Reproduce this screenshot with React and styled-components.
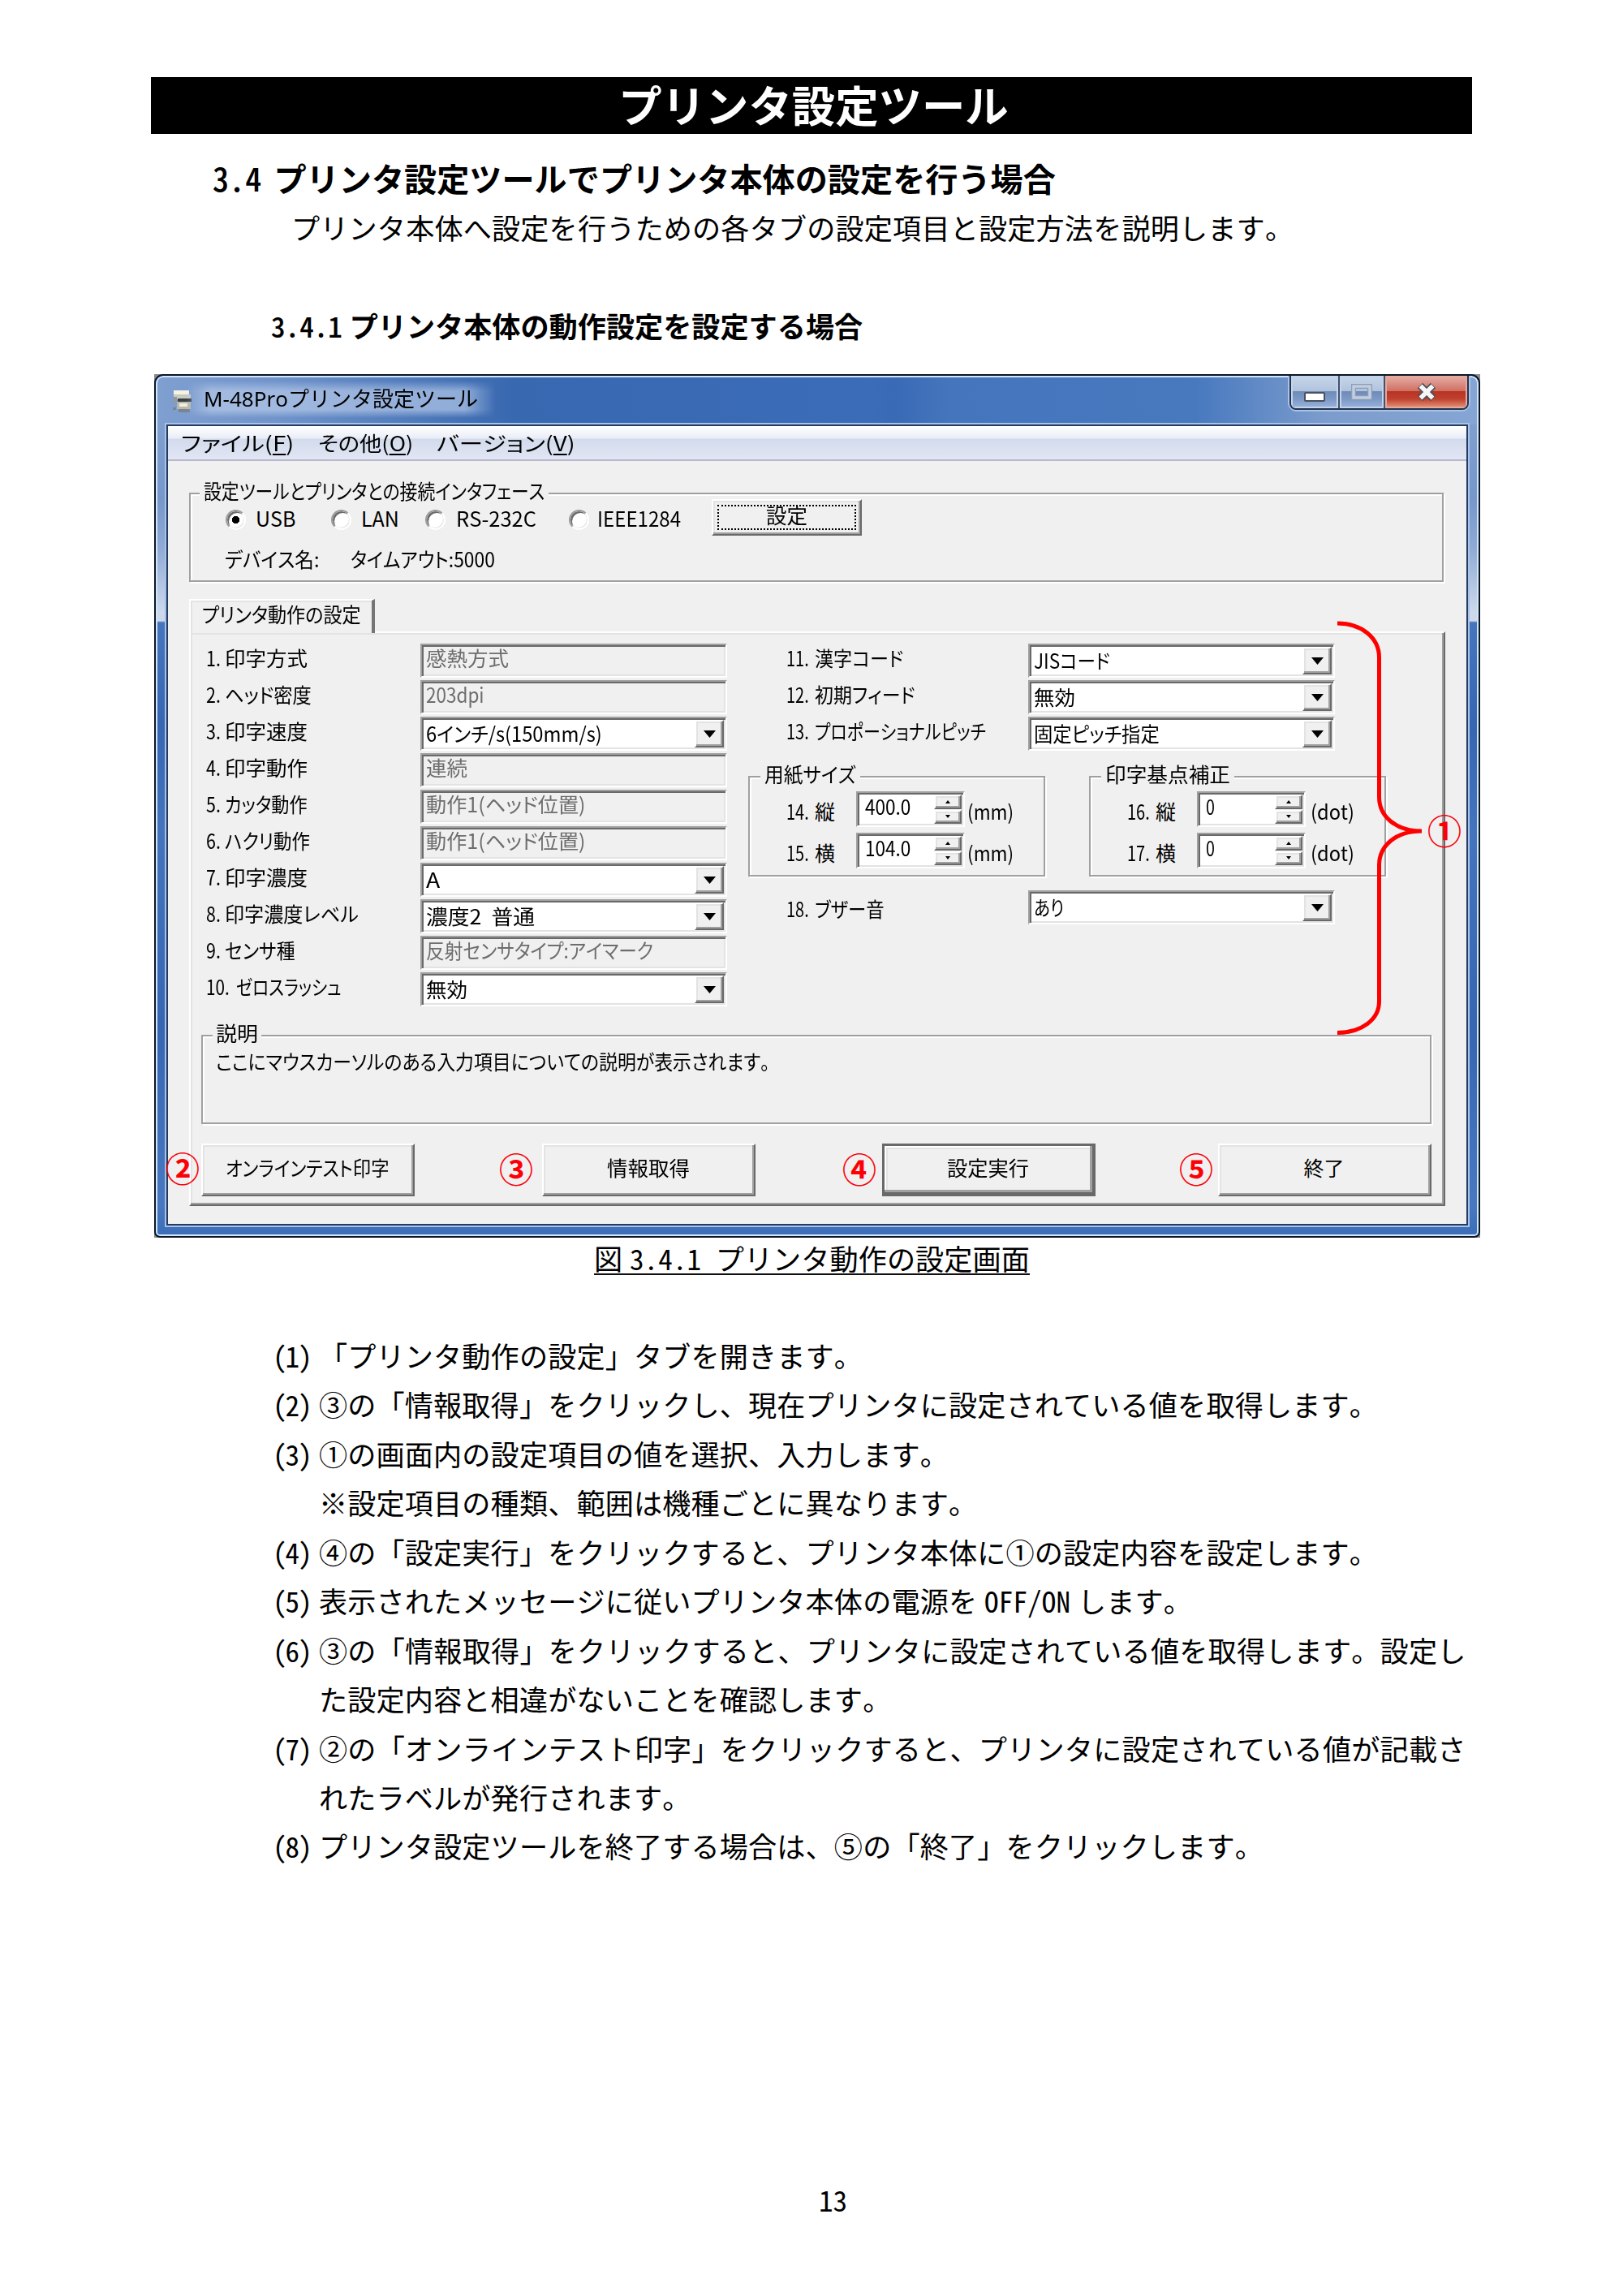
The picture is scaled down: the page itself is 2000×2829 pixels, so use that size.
import React, { useLayoutEffect, useRef, useState } from "react";
import styled, { createGlobalStyle, css } from "styled-components";

const GlobalStyle = createGlobalStyle`
  html, body { margin: 0; padding: 0; background: #fff; }
  *, *::before, *::after { box-sizing: border-box; }
`;

const gothic = `"Noto Sans CJK JP", "Liberation Sans", sans-serif`;
const face = "#f0f0f0";

/* ---------- document ---------- */

const Page = styled.main`
  width: 2000px;
  height: 2829px;
  padding: 95px 186px 0;
  display: flex;
  flex-direction: column;
  background: #fff;
  color: #000;
  font-family: ${gothic};
  font-size: 35.15px;
  font-feature-settings: "hwid";
  text-spacing-trim: space-all;
  font-kerning: none;
  white-space: nowrap;
`;

const Banner = styled.h1`
  margin: 0;
  height: 70px;
  padding-left: 5px;
  background: #000;
  color: #fff;
  font-size: 53.4px;
  font-weight: 700;
  line-height: 65px;
  text-align: center;
`;

const SectionTitle = styled.h2`
  margin: 28px 0 0 76px;
  height: 50px;
  line-height: 51px;
  font-size: 40.15px;
  font-weight: 700;
`;

const HeadNo = styled.span`
  font-weight: 500;
`;

const Lead = styled.p`
  margin: 11px 0 0 173px;
  height: 50px;
  line-height: 51px;
  letter-spacing: 0.15px;
`;

const SubTitle = styled.h3`
  margin: 71px 0 0 148px;
  height: 50px;
  line-height: 51px;
  font-size: inherit;
  font-weight: 700;
`;

const Space = styled.span`
  display: inline-block;
  width: ${(p) => p.$em}em;
`;

const Caption = styled.p`
  margin: 2px 0 0 546px;
  width: 537px;
  height: 44px;
  line-height: 45px;
  letter-spacing: 0.06px;
  border-bottom: 2px solid #111;
`;

const Steps = styled.ol`
  margin: 69px 0 0 147px;
  padding: 0;
  list-style: none;
`;

const Step = styled.li`
  display: flex;
  line-height: 60.45px;
`;

const StepNo = styled.span`
  width: 60px;
  padding-left: 3px;
  flex: none;
  letter-spacing: -2px;
`;

const StepLine = styled.div`
  height: 60.45px;
  letter-spacing: ${(p) => (p.$wide ? "0.2px" : "0.13px")};
`;

const PageNo = styled.footer`
  margin: 375px 0 0 823px;
  line-height: 60px;
`;

/* ---------- window chrome ---------- */

const WindowBack = styled.section`
  flex: none;
  width: 1634px;
  height: 1064px;
  margin: 36px 0 0 4px;
  background: #8b8b8b;
  font-size: 25px;
  font-feature-settings: "palt";
`;

const Frame = styled.div`
  height: 100%;
  border: 2px solid #0b1626;
  border-radius: 11px 11px 7px 7px;
  background: #3b6db8;
  overflow: hidden;
`;

const Glass = styled.div`
  height: 100%;
  border: 2px solid #d3e6fa;
  border-radius: 9px 9px 5px 5px;
  padding: 0 9px 9px;
  display: flex;
  flex-direction: column;
  background:
    linear-gradient(90deg, #7f9fd0 0, #7093cb 150px, #3868b0 440px, #3b6cb8 880px, #386ab5 905px, #4576bd 980px, #4879bf 1280px, #7c9ccd 1440px, #85a5d4 1626px) 0 0 / 100% 58px no-repeat,
    linear-gradient(180deg, #85a4d4 0, #7697cb 150px, #8faad5 210px, #cdd9eb 290px, #cdd9eb 300px, #4576bd 302px, #3666b2 430px, #4374bd 560px, #3666b2 800px, #4778c0 1020px, #3b6cb8 1060px);
`;

const TitleBar = styled.header`
  height: 56px;
  flex: none;
  display: flex;
  align-items: flex-start;
`;

const AppIcon = styled.svg`
  width: 26px;
  height: 30px;
  margin: 14px 0 0 9px;
`;

const TitleText = styled.div`
  margin: 4px 0 0 -9px;
  padding: 0 22px;
  height: 46px;
  line-height: 44px;
  font-family: "Noto Sans", ${gothic};
  font-size: 26px;
  font-feature-settings: normal;
  background: linear-gradient(90deg, rgba(190, 208, 236, 0), rgba(190, 208, 236, 0.62) 8%, rgba(190, 208, 236, 0.62) 90%, rgba(190, 208, 236, 0));
  -webkit-mask-image: linear-gradient(180deg, transparent, #000 28%, #000 78%, transparent);
  mask-image: linear-gradient(180deg, transparent, #000 28%, #000 78%, transparent);
`;

const WindowButtons = styled.div`
  margin: -2px 1px 0 auto;
  display: flex;
  height: 42px;
  border: 2px solid #22344f;
  border-top: 0;
  border-radius: 0 0 8px 8px;
  box-shadow: 0 2px 0 #a9c2e6, 2px 0 0 #a9c2e6, -2px 0 0 #a9c2e6;
  overflow: hidden;
`;

const WindowButton = styled.div`
  width: ${(p) => p.$w}px;
  display: flex;
  align-items: center;
  justify-content: center;
  border: 2px solid ${(p) => (p.$close ? "#e7a79d" : "#c3d3ea")};
  border-top-width: 1px;
  background: ${(p) =>
    p.$close
      ? "linear-gradient(180deg, #e6aca3 0, #cf6f62 48%, #b93323 50%, #c0412f 75%, #df8a70 100%)"
      : "linear-gradient(180deg, #c6d5e9 0, #b0c3de 48%, #6f8cb9 50%, #7c99c6 75%, #94afd8 100%)"};
  & + & {
    box-shadow: -2px 0 0 #40526e;
    margin-left: 2px;
  }
`;

const ClientEdge = styled.div`
  flex: 1;
  border: 2px solid #a9c3e8;
`;

const Client = styled.div`
  height: 100%;
  border: 2px solid #243b62;
  background: ${face};
`;

const MenuBar = styled.nav`
  height: 43px;
  padding: 0 0 0 16px;
  display: flex;
  line-height: 41px;
  background: linear-gradient(180deg, #fff 0, #e9edf7 15px, #d2dbec 16px, #e2e6f5 41px);
  border-bottom: 2px solid #b7b8cd;
`;

const MenuItem = styled.span`
  margin-right: ${(p) => p.$after || 0}px;
  u { text-underline-offset: 3px; text-decoration-thickness: 2px; }
`;

/* ---------- text fitted to the narrow UI font's advance ---------- */

const FitBox = styled.span`
  display: inline-block;
  flex: none;
  white-space: pre;
`;

const FitInner = styled.span`
  display: inline-block;
  transform-origin: 0 50%;
`;

function Fit({ w, children }) {
  const ref = useRef(null);
  const [scale, setScale] = useState(1);
  useLayoutEffect(() => {
    if (ref.current && ref.current.offsetWidth) setScale(w / ref.current.offsetWidth);
  }, [w, children]);
  return (
    <FitBox style={{ width: w }}>
      <FitInner ref={ref} style={{ transform: `scaleX(${scale})` }}>
        {children}
      </FitInner>
    </FitBox>
  );
}

/* ---------- classic controls ---------- */

const raised = css`
  background: ${face};
  border: 2px solid;
  border-color: #fff #696969 #696969 #fff;
  box-shadow: inset -2px -2px 0 #a0a0a0, inset 2px 2px 0 #e3e3e3;
`;

const Body = styled.div`
  padding: 39px 26px 0;
`;

const Group = styled.section`
  width: ${(p) => p.$w}px;
  height: ${(p) => p.$h}px;
  margin-left: ${(p) => p.$left || 0}px;
  border: 2px solid #a0a0a0;
  box-shadow: 2px 2px 0 #fff, inset 2px 2px 0 #fff;
`;

const Legend = styled.div`
  width: fit-content;
  height: 26px;
  line-height: 26px;
  margin: -18px 0 0 ${(p) => p.$left}px;
  padding: 0 ${(p) => p.$pad || 5}px;
  background: ${face};
`;

const InterfaceRow = styled.div`
  height: 45px;
  margin-top: -2px;
  padding-left: 43px;
  display: flex;
  align-items: center;
`;

const RadioLabel = styled.label`
  display: flex;
  align-items: center;
  line-height: 46px;
  gap: ${(p) => p.$gap}px;
  margin-right: ${(p) => p.$after}px;
`;

const RadioDot = styled.span`
  width: 25px;
  height: 25px;
  margin-top: 6px;
  border-radius: 50%;
  border: 2px solid;
  border-color: #9a9a9a #fff #fff #9a9a9a;
  background: ${(p) =>
    p.$on ? "radial-gradient(circle, #000 0 4.4px, #fff 5px)" : "#fff"};
  box-shadow: inset 2px 2px 0 #6b6b6b, inset -1px -1px 0 #e3e3e3;
`;

const DeviceRow = styled.div`
  margin: 15px 0 0 42px;
  height: 26px;
  line-height: 26px;
  display: flex;
  gap: 39px;
`;

const SetButton = styled.button`
  ${raised}
  width: 185px;
  height: 45px;
  padding: 5px;
  font: inherit;
  font-feature-settings: inherit;
  color: #000;
`;

const FocusRing = styled.span`
  display: block;
  height: 31px;
  border: 2px dotted #000;
  line-height: 21px;
`;

const Tab = styled.div`
  position: relative;
  z-index: 1;
  width: 229px;
  height: 42px;
  margin: 21px 0 -2px;
  padding-left: 14px;
  line-height: 32px;
  background: ${face};
  border: solid;
  border-width: 2px 4px 0 2px;
  border-color: #fff #757575 #fff #fff;
  box-shadow: inset 2px 2px 0 #e3e3e3;
`;

const Pane = styled.section`
  ${raised}
  position: relative;
  width: 1548px;
  height: 708px;
`;

const Columns = styled.div`
  height: 495px;
  padding: 13px 0 0 19px;
  display: flex;
  gap: 26px;
`;

const Column = styled.div`
  display: flex;
  flex-direction: column;
  gap: 3px;
`;

const FieldRow = styled.div`
  display: flex;
  height: 42px;
  padding-left: ${(p) => p.$indent || 0}px;
`;

const FieldLabel = styled.div`
  width: ${(p) => p.$w}px;
  padding-top: ${(p) => p.$top ?? 4}px;
  line-height: 26px;
  display: flex;
`;

const FieldNo = styled.span`
  width: ${(p) => p.$w}px;
  flex: none;
`;

const sunken = css`
  border: 2px solid;
  border-color: #a0a0a0 #fff #fff #a0a0a0;
  box-shadow: inset 2px 2px 0 #696969, inset -2px -2px 0 #e3e3e3;
`;

const FieldBox = styled.div`
  ${sunken}
  width: 378px;
  height: 42px;
  padding: 2px 2px 2px 5px;
  display: flex;
  justify-content: space-between;
  line-height: ${(p) => (p.$off ? 27 : 33)}px;
  color: ${(p) => (p.$off ? "#6d6d6d" : "#000")};
  background: ${(p) => (p.$off ? face : "#fff")};
`;

const DropButton = styled.span`
  ${raised}
  width: 36px;
  height: 34px;
  display: flex;
  align-items: center;
  justify-content: center;
`;

const Groups = styled.div`
  display: flex;
  gap: 54px;
  margin: 28px 0 14px;
`;

const SpinRow = styled.div`
  display: flex;
  height: 44px;
  margin-top: ${(p) => p.$gap}px;
  padding-left: 45px;
  line-height: 48px;
`;

const SpinLabel = styled.span`
  width: 51px;
`;

const SpinBox = styled.span`
  ${sunken}
  width: 134px;
  height: 44px;
  padding: 2px 2px 2px 9px;
  margin-right: ${(p) => p.$after}px;
  display: flex;
  justify-content: space-between;
  line-height: 29px;
  background: #fff;
`;

const SpinButtons = styled.span`
  display: flex;
  flex-direction: column;
  gap: 1px;
  background: ${face};
`;

const SpinButton = styled.span`
  ${raised}
  width: 34px;
  height: 18px;
  display: flex;
  align-items: center;
  justify-content: center;
`;

const HelpText = styled.p`
  margin: 9px 0 0 16px;
  line-height: 26px;
`;

const Actions = styled.div`
  display: flex;
  margin: 24px 0 0 13px;
`;

const ActionSlot = styled.div`
  position: relative;
  margin-right: ${(p) => p.$after || 0}px;
`;

const ActionButton = styled.button`
  ${raised}
  display: block;
  width: 263px;
  height: 65px;
  padding: 0 2px 7px 0;
  font: inherit;
  font-feature-settings: inherit;
  color: #000;
  ${(p) =>
    p.$primary &&
    css`
      border: 3px solid #696969;
      border-width: 3px 4px 5px 3px;
      padding-bottom: 5px;
      box-shadow: inset -3px -3px 0 #a0a0a0, inset 2px 2px 0 #fff, inset 4px 4px 0 #e3e3e3;
    `}
`;

const Callout = styled.span`
  position: absolute;
  z-index: 2;
  left: ${(p) => p.$x}px;
  top: ${(p) => p.$y}px;
  width: 44px;
  height: 44px;
  margin: -22px 0 0 -22px;
  line-height: 40px;
  font-size: 42px;
  font-weight: 700;
  font-feature-settings: normal;
  text-align: center;
  color: #fb0007;
`;

const Brace = styled.svg`
  position: absolute;
  z-index: 2;
  left: 1411px;
  top: -16px;
  width: 112px;
  height: 514px;
  overflow: visible;
`;

/* ---------- pieces ---------- */

const Arrow = ({ w = 15, h = 9, up }) => (
  <svg width={w} height={h} viewBox="0 0 14 8" preserveAspectRatio="none">
    <path d={up ? "M0 8 L7 0 L14 8Z" : "M0 0 L14 0 L7 8Z"} fill="#000" />
  </svg>
);

function Radio({ text, w, gap, after, on }) {
  return (
    <RadioLabel $gap={gap} $after={after}>
      <RadioDot $on={on} />
      <Fit w={w}>{text}</Fit>
    </RadioLabel>
  );
}

function Field({ no, noW, noCol, label, labelW, col, value, valueW, off, indent, top }) {
  return (
    <FieldRow $indent={indent}>
      <FieldLabel $w={col} $top={top}>
        <FieldNo $w={noCol}>
          <Fit w={noW}>{no}</Fit>
        </FieldNo>
        <Fit w={labelW}>{label}</Fit>
      </FieldLabel>
      <FieldBox $off={off}>
        <Fit w={valueW}>{value}</Fit>
        {!off && (
          <DropButton>
            <Arrow />
          </DropButton>
        )}
      </FieldBox>
    </FieldRow>
  );
}

function Spin({ no, label, value, valueW, unit, unitW, gap, unitGap = 3 }) {
  return (
    <SpinRow $gap={gap}>
      <FieldNo $w={35}>
        <Fit w={28}>{no}</Fit>
      </FieldNo>
      <SpinLabel>{label}</SpinLabel>
      <SpinBox $after={unitGap}>
        <Fit w={valueW}>{value}</Fit>
        <SpinButtons>
          <SpinButton><Arrow up w={6} h={4} /></SpinButton>
          <SpinButton><Arrow w={6} h={4} /></SpinButton>
        </SpinButtons>
      </SpinBox>
      <Fit w={unitW}>{unit}</Fit>
    </SpinRow>
  );
}

const leftFields = [
  ["1.", "印字方式", 102, "感熱方式", 102, true],
  ["2.", "ヘッド密度", 107, "203dpi", 72, true],
  ["3.", "印字速度", 102, "6インチ/s(150mm/s)", 217],
  ["4.", "印字動作", 102, "連続", 51, true],
  ["5.", "カッタ動作", 102, "動作1(ヘッド位置)", 197, true],
  ["6.", "ハクリ動作", 105, "動作1(ヘッド位置)", 197, true],
  ["7.", "印字濃度", 102, "A", 17],
  ["8.", "印字濃度レベル", 165, "濃度2  普通", 134],
  ["9.", "センサ種", 87, "反射センサタイプ:アイマーク", 280, true],
  ["10.", "ゼロスラッシュ", 130, "無効", 51],
];

const rightFields = [
  ["11.", "漢字コード", 109, "JISコード", 94],
  ["12.", "初期フィード", 124, "無効", 51],
  ["13.", "プロポーショナルピッチ", 211, "固定ピッチ指定", 155],
];

const actions = [
  { text: "オンラインテスト印字", w: 202, mark: "②", x: -23, y: 31, after: 157 },
  { text: "情報取得", w: 102, mark: "③", x: -32, y: 32, after: 156 },
  { text: "設定実行", w: 101, mark: "④", x: -28, y: 32, after: 151, primary: true },
  { text: "終了", w: 50, mark: "⑤", x: -27, y: 32 },
];

const steps = [
  ["(1)", ["「プリンタ動作の設定」タブを開きます。"]],
  ["(2)", ["③の「情報取得」をクリックし、現在プリンタに設定されている値を取得します。"]],
  ["(3)", ["①の画面内の設定項目の値を選択、入力します。", "※設定項目の種類、範囲は機種ごとに異なります。"]],
  ["(4)", ["④の「設定実行」をクリックすると、プリンタ本体に①の設定内容を設定します。"]],
  ["(5)", [
    <React.Fragment key="p">
      表示されたメッセージに従いプリンタ本体の電源を<Space $em={0.25} />OFF/ON<Space $em={0.25} />します。
    </React.Fragment>,
  ]],
  ["(6)", ["③の「情報取得」をクリックすると、プリンタに設定されている値を取得します。設定し", "た設定内容と相違がないことを確認します。"]],
  ["(7)", ["②の「オンラインテスト印字」をクリックすると、プリンタに設定されている値が記載さ", "れたラベルが発行されます。"]],
  ["(8)", ["プリンタ設定ツールを終了する場合は、⑤の「終了」をクリックします。"]],
];

function PrinterIcon() {
  return (
    <AppIcon viewBox="0 0 26 30">
      <path d="M2 2h19v5H2z" fill="#f4f3e4" />
      <path d="M2 7h21v6H2z" fill="#c9cbbd" />
      <path d="M7 12h17v4H7z" fill="#3b3f45" />
      <path d="M6 16h17v9H6z" fill="#b9b9aa" />
      <path d="M9 18h10v4H9z" fill="#efeee0" />
      <path d="M1 10h5v8H1z" fill="#8f9aa8" />
      <path d="M1 23h4v3H1z M8 25h14v4H8z" fill="#7b8390" />
    </AppIcon>
  );
}

function SettingsWindow() {
  return (
    <WindowBack>
      <Frame>
        <Glass>
          <TitleBar>
            <PrinterIcon />
            <TitleText>
              <Fit w={338}>M-48Proプリンタ設定ツール</Fit>
            </TitleText>
            <WindowButtons>
              <WindowButton $w={58}>
                <svg width="26" height="12" style={{ marginTop: 12 }}>
                  <rect x="1" y="1" width="24" height="10" rx="1" fill="#fff" stroke="#4a5160" strokeWidth="2" />
                </svg>
              </WindowButton>
              <WindowButton $w={54}>
                <svg width="26" height="20">
                  <rect x="3" y="3" width="20" height="14" fill="none" stroke="#8d9db6" strokeWidth="6" />
                  <rect x="3" y="3" width="20" height="14" fill="none" stroke="#c2cfe1" strokeWidth="3.4" />
                </svg>
              </WindowButton>
              <WindowButton $w={101} $close>
                <svg width="26" height="22" viewBox="0 0 26 22">
                  <path d="M5 3 L21 19 M21 3 L5 19" stroke="#4c4f5a" strokeWidth="9" />
                  <path d="M5.5 3.5 L20.5 18.5 M20.5 3.5 L5.5 18.5" stroke="#f6f6f6" strokeWidth="5.4" />
                </svg>
              </WindowButton>
            </WindowButtons>
          </TitleBar>
          <ClientEdge>
            <Client>
              <MenuBar>
                <MenuItem $after={30}><Fit w={139}>ファイル(<u>F</u>)</Fit></MenuItem>
                <MenuItem $after={29}><Fit w={117}>その他(<u>O</u>)</Fit></MenuItem>
                <MenuItem><Fit w={171}>バージョン(<u>V</u>)</Fit></MenuItem>
              </MenuBar>
              <Body>
                <Group $w={1546} $h={110}>
                  <Legend $left={11}><Fit w={420}>設定ツールとプリンタとの接続インタフェース</Fit></Legend>
                  <InterfaceRow>
                    <Radio text="USB" w={49} gap={12} after={44} on />
                    <Radio text="LAN" w={47} gap={12} after={32} />
                    <Radio text="RS-232C" w={99} gap={13} after={40} />
                    <Radio text="IEEE1284" w={103} gap={10} after={38} />
                    <SetButton type="button">
                      <FocusRing><Fit w={51}>設定</Fit></FocusRing>
                    </SetButton>
                  </InterfaceRow>
                  <DeviceRow>
                    <Fit w={116}>デバイス名:</Fit>
                    <Fit w={178}>タイムアウト:5000</Fit>
                  </DeviceRow>
                </Group>
                <Tab><Fit w={196}>プリンタ動作の設定</Fit></Tab>
                <Pane>
                  <Columns>
                    <Column>
                      {leftFields.map(([no, label, labelW, value, valueW, off]) => (
                        <Field key={no} no={no} noW={no.length > 2 ? 29 : 18} noCol={no.length > 2 ? 37 : 23}
                          label={label} labelW={labelW} col={264} value={value} valueW={valueW} off={off} />
                      ))}
                    </Column>
                    <Column>
                      {rightFields.map(([no, label, labelW, value, valueW]) => (
                        <Field key={no} no={no} noW={28} noCol={35} indent={47}
                          label={label} labelW={labelW} col={298} value={value} valueW={valueW} />
                      ))}
                      <Groups>
                        <Group $w={366} $h={124}>
                          <Legend $left={13}><Fit w={113}>用紙サイズ</Fit></Legend>
                          <Spin gap={9} no="14." label="縦" value="400.0" valueW={56} unit="(mm)" unitW={57} />
                          <Spin gap={7} no="15." label="横" value="104.0" valueW={56} unit="(mm)" unitW={57} />
                        </Group>
                        <Group $w={366} $h={124}>
                          <Legend $left={13}><Fit w={154}>印字基点補正</Fit></Legend>
                          <Spin gap={9} no="16." label="縦" value="0" valueW={11} unit="(dot)" unitW={54} unitGap={6} />
                          <Spin gap={7} no="17." label="横" value="0" valueW={11} unit="(dot)" unitW={54} unitGap={6} />
                        </Group>
                      </Groups>
                      <Field no="18." noW={28} noCol={35} indent={47} top={9}
                        label="ブザー音" labelW={86} col={298} value="あり" valueW={37} />
                    </Column>
                  </Columns>
                  <Group $w={1516} $h={110} $left={13}>
                    <Legend $left={12} $pad={4}><Fit w={52}>説明</Fit></Legend>
                    <HelpText>
                      <Fit w={683}>ここにマウスカーソルのある入力項目についての説明が表示されます。</Fit>
                    </HelpText>
                  </Group>
                  <Actions>
                    {actions.map((a) => (
                      <ActionSlot key={a.text} $after={a.after}>
                        <Callout $x={a.x} $y={a.y}>{a.mark}</Callout>
                        <ActionButton type="button" $primary={a.primary}>
                          <Fit w={a.w}>{a.text}</Fit>
                        </ActionButton>
                      </ActionSlot>
                    ))}
                  </Actions>
                  <Brace viewBox="0 0 112 514" aria-hidden="true">
                    <path
                      d="M2 4 C32 4 53.500 22 53.500 46 V218 C53.500 242 74 260 106 260 C74 260 53.500 278 53.500 302 V470 C53.500 492 32 508.500 2 508.500"
                      fill="none" stroke="#ff0000" strokeWidth="5"
                    />
                  </Brace>
                  <Callout $x={1545} $y={244}>①</Callout>
                </Pane>
              </Body>
            </Client>
          </ClientEdge>
        </Glass>
      </Frame>
    </WindowBack>
  );
}

export default function App() {
  return (
    <>
      <GlobalStyle />
      <Page lang="ja">
        <Banner>プリンタ設定ツール</Banner>
        <SectionTitle><HeadNo>3.4</HeadNo><Space $em={0.38} />プリンタ設定ツールでプリンタ本体の設定を行う場合</SectionTitle>
        <Lead>プリンタ本体へ設定を行うための各タブの設定項目と設定方法を説明します。</Lead>
        <SubTitle><HeadNo>3.4.1</HeadNo><Space $em={0.25} />プリンタ本体の動作設定を設定する場合</SubTitle>
        <SettingsWindow />
        <Caption>図<Space $em={0.25} />3.4.1<Space $em={0.5} />プリンタ動作の設定画面</Caption>
        <Steps>
          {steps.map(([no, lines]) => (
            <Step key={no}>
              <StepNo>{no}</StepNo>
              <div>
                {lines.map((line, i) => (
                  <StepLine key={i} $wide={Number(no[1]) > 5 && lines.length > 1 && i === 0}>{line}</StepLine>
                ))}
              </div>
            </Step>
          ))}
        </Steps>
        <PageNo>13</PageNo>
      </Page>
    </>
  );
}
